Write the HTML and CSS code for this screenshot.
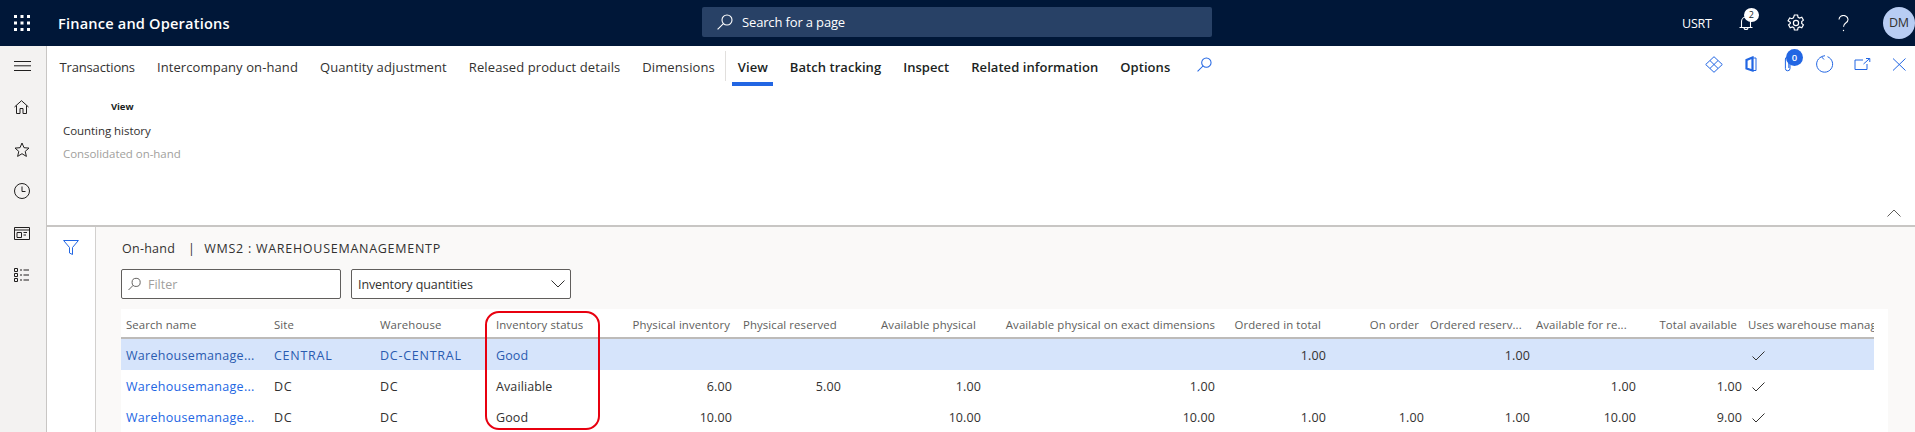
FILE: index.html
```html
<!DOCTYPE html>
<html lang="en">
<head>
<meta charset="utf-8">
<title>On-hand</title>
<link rel="stylesheet" href="styles.css">
</head>
<body>
<header class="topbar">
  <div class="brand">
    <svg class="waffle" width="16" height="16" viewBox="0 0 16 16" fill="#fff"><rect x="0" y="0" width="3" height="3"/><rect x="6.5" y="0" width="3" height="3"/><rect x="13" y="0" width="3" height="3"/><rect x="0" y="6.5" width="3" height="3"/><rect x="6.5" y="6.5" width="3" height="3"/><rect x="13" y="6.5" width="3" height="3"/><rect x="0" y="13" width="3" height="3"/><rect x="6.5" y="13" width="3" height="3"/><rect x="13" y="13" width="3" height="3"/></svg>
    <span class="app-name">Finance and Operations</span>
  </div>
  <div class="search">
    <svg width="16" height="16" viewBox="0 0 16 16" fill="none" stroke="#fff" stroke-width="1.1"><circle cx="10" cy="6" r="5"/><path d="M6.4 9.6 L0.6 15.4"/></svg>
    <span>Search for a page</span>
  </div>
  <div class="top-actions">
    <span class="company">USRT</span>
    <span class="bell">
      <svg width="14" height="16" viewBox="0 0 14 16" fill="none" stroke="#fff" stroke-width="1.1"><path d="M2.5 12.5V6.5a4.5 4.5 0 0 1 9 0v6M.5 12.5h13M5 12.5a2 2 0 0 0 4 0"/></svg>
      <span class="bell-badge">2</span>
    </span>
    <svg class="gear" width="18" height="18" viewBox="0 0 18 18" fill="none" stroke="#fff" stroke-width="1.2"><circle cx="9" cy="9" r="2.6"/><path d="M7.4 1h3.2l.5 2.3 1.5.8 2.2-.8 1.6 2.8-1.7 1.5v1.8l1.7 1.5-1.6 2.8-2.2-.8-1.5.8-.5 2.3H7.4l-.5-2.3-1.5-.8-2.2.8-1.6-2.8 1.7-1.5V8.2L1.100 6.700 2.700 3.900l2.200.8 1.500-.8z"/></svg>
    <svg class="help" width="11" height="17" viewBox="0 0 11 17" fill="none" stroke="#fff" stroke-width="1.1"><path d="M1 4.500a4.500 4 0 1 1 7 3.300c-1.600 1.100-2.500 1.900-2.500 4"/><circle cx="5.500" cy="15.500" r=".7" fill="#fff" stroke="none"/></svg>
    <span class="avatar">DM</span>
  </div>
</header>

<div class="shell">
  <nav class="rail">
    <span class="rail-btn rail-menu"><svg width="17" height="10" viewBox="0 0 17 10" stroke="#201f1e"><path d="M0 .5h17M0 4.800h17M0 9.500h17"/></svg></span>
    <span class="rail-btn"><svg width="15" height="14" viewBox="0 0 15 14" fill="none" stroke="#201f1e"><path d="M.5 7 7.500.7 14.500 7M2.500 5.500v8h3.500V8.500h3v5h3.500v-8"/></svg></span>
    <span class="rail-btn"><svg width="16" height="15" viewBox="0 0 16 15" fill="none" stroke="#201f1e"><path d="M8 1l2 4.700 5 .4-3.800 3.300 1.200 5L8 11.700l-4.400 2.700 1.200-5L1 6.100l5-.4z"/></svg></span>
    <span class="rail-btn"><svg width="16" height="16" viewBox="0 0 16 16" fill="none" stroke="#201f1e"><circle cx="8" cy="8" r="7.500"/><path d="M8 3.500V8.500h3.500"/></svg></span>
    <span class="rail-btn"><svg width="16" height="13" viewBox="0 0 16 13" fill="none" stroke="#201f1e"><path d="M.5.500h15v12H.5zM.5 3h15M3 5.500h4.500v5H3zM9.500 5.500h3.500M9.500 8h2.500"/></svg></span>
    <span class="rail-btn"><svg width="15" height="14" viewBox="0 0 15 14" fill="none" stroke="#201f1e"><path d="M.5.500h3v3h-3zM.5 5.500h3v3h-3zM.5 10.500h3v3h-3zM6 2h2M9.500 2H15M6 7h2M9.500 7H15M6 12h2M9.500 12H15"/></svg></span>
  </nav>

  <div class="workspace">
    <section class="ribbon">
      <div class="tabstrip">
        <span class="tab tab-first">Transactions</span>
        <span class="tab">Intercompany on-hand</span>
        <span class="tab">Quantity adjustment</span>
        <span class="tab">Released product details</span>
        <span class="tab">Dimensions</span>
        <span class="tab-sep"></span>
        <span class="tab tab-strong tab-active">View</span>
        <span class="tab tab-strong">Batch tracking</span>
        <span class="tab tab-strong">Inspect</span>
        <span class="tab tab-strong">Related information</span>
        <span class="tab tab-strong">Options</span>
        <svg class="tab-search" width="15" height="15" viewBox="0 0 16 16" fill="none" stroke="#2266e3" stroke-width="1.100"><circle cx="10" cy="6" r="5"/><path d="M6.400 9.600 L.6 15.400"/></svg>
        <div class="form-actions">
          <svg width="18" height="17" viewBox="0 0 18 17" fill="none" stroke="#2266e3"><path d="M9 .7 17.300 8.500 9 16.300.7 8.500zM5 4.600 9 8.500l4-3.900M5 12.400 9 8.500l4 3.900"/></svg>
          <svg width="18" height="16" viewBox="0 0 18 16" fill="none" stroke="#2266e3"><path d="M10 2h4v12.500h-4" /><path d="M4.500 4v8.500l6 2V1.500z" fill="#fff" stroke-width="2.200"/></svg>
          <span class="clip">
            <svg width="18" height="16" viewBox="0 0 18 16" fill="none" stroke="#2266e3"><path d="M11 3v9.500a2.300 2.300 0 0 1-4.600 0V3a1.700 1.700 0 0 1 3.400 0v9"/></svg>
            <span class="clip-badge">0</span>
          </span>
          <svg width="18" height="18" viewBox="0 0 18 18" fill="none" stroke="#2266e3"><path d="M11.500 1.700A8 8 0 1 1 5.500 1.800M5.500 1.500 9 .7M5.500 1.800 8 4.500"/></svg>
          <svg width="18" height="12" viewBox="0 0 18 12" fill="none" stroke="#2266e3"><path d="M10 2H2v9.500h12V6M10.500 6 16.500 .7M13 .5h3.800v3.500"/></svg>
          <svg width="18" height="13" viewBox="0 0 18 13" fill="none" stroke="#2266e3"><path d="M3 .5l12.500 12M15.500.5 3 12.500"/></svg>
        </div>
      </div>
      <div class="ribbon-group">
        <div class="group-title">View</div>
        <div class="group-item">Counting history</div>
        <div class="group-item group-item-off">Consolidated on-hand</div>
      </div>
      <svg class="collapse" width="14" height="8" viewBox="0 0 14 8" fill="none" stroke="#605e5c"><path d="M.5 7.500 7 1l6.500 6.500"/></svg>
    </section>

    <section class="lower">
      <aside class="filter-pane">
        <svg width="16" height="15" viewBox="0 0 16 15" fill="none" stroke="#2266e3"><path d="M.6.500h14.800L9.500 7.500v7l-3-1.500V7.500z"/></svg>
      </aside>
      <main class="content">
        <div class="caption"><span>On-hand</span><span class="caption-bar">|</span><span class="caption-id">WMS2 : WAREHOUSEMANAGEMENTP</span></div>
        <div class="controls">
          <div class="filter-box">
            <svg width="13" height="14" viewBox="0 0 16 16" fill="none" stroke="#605e5c" stroke-width="1.200"><circle cx="10" cy="6" r="5"/><path d="M6.400 9.600 L.6 15.400"/></svg>
            <span>Filter</span>
          </div>
          <div class="select-box">
            <span>Inventory quantities</span>
            <svg width="14" height="8" viewBox="0 0 14 8" fill="none" stroke="#323130"><path d="M.5.500 7 7l6.500-6.500"/></svg>
          </div>
        </div>
        <div class="card">
          <div class="grid">
            <div class="row head">
              <span class="cell">Search name</span>
              <span class="cell">Site</span>
              <span class="cell">Warehouse</span>
              <span class="cell">Inventory status</span>
              <span class="cell num h7">Physical inventory</span>
              <span class="cell h-left">Physical reserved</span>
              <span class="cell num h10">Available physical</span>
              <span class="cell num">Available physical on exact dimensions</span>
              <span class="cell num h10">Ordered in total</span>
              <span class="cell num h10">On order</span>
              <span class="cell h-tight">Ordered reserv...</span>
              <span class="cell h-tight">Available for re...</span>
              <span class="cell num h10">Total available</span>
              <span class="cell h-tight clip-text">Uses warehouse management</span>
            </div>
            <div class="row selected">
              <span class="cell name">Warehousemanage...</span>
              <span class="cell caps">CENTRAL</span>
              <span class="cell caps">DC-CENTRAL</span>
              <span class="cell">Good</span>
              <span class="cell num"></span>
              <span class="cell num"></span>
              <span class="cell num"></span>
              <span class="cell num"></span>
              <span class="cell num value">1.00</span>
              <span class="cell num"></span>
              <span class="cell num value">1.00</span>
              <span class="cell num"></span>
              <span class="cell num"></span>
              <span class="cell tick"><svg width="13" height="10" viewBox="0 0 13 10" fill="none" stroke="#323130"><path d="M.5 5.500 4 9 12.500.5"/></svg></span>
            </div>
            <div class="row">
              <span class="cell name link">Warehousemanage...</span>
              <span class="cell caps">DC</span>
              <span class="cell caps">DC</span>
              <span class="cell">Availiable</span>
              <span class="cell num">6.00</span>
              <span class="cell num">5.00</span>
              <span class="cell num">1.00</span>
              <span class="cell num">1.00</span>
              <span class="cell num"></span>
              <span class="cell num"></span>
              <span class="cell num"></span>
              <span class="cell num">1.00</span>
              <span class="cell num">1.00</span>
              <span class="cell tick"><svg width="13" height="10" viewBox="0 0 13 10" fill="none" stroke="#323130"><path d="M.5 5.500 4 9 12.500.5"/></svg></span>
            </div>
            <div class="row">
              <span class="cell name link">Warehousemanage...</span>
              <span class="cell caps">DC</span>
              <span class="cell caps">DC</span>
              <span class="cell">Good</span>
              <span class="cell num">10.00</span>
              <span class="cell num"></span>
              <span class="cell num">10.00</span>
              <span class="cell num">10.00</span>
              <span class="cell num">1.00</span>
              <span class="cell num">1.00</span>
              <span class="cell num">1.00</span>
              <span class="cell num">10.00</span>
              <span class="cell num">9.00</span>
              <span class="cell tick"><svg width="13" height="10" viewBox="0 0 13 10" fill="none" stroke="#323130"><path d="M.5 5.500 4 9 12.500.5"/></svg></span>
            </div>
          </div>
          <div class="highlight"></div>
        </div>
      </main>
    </section>
  </div>
</div>
</body>
</html>
```
FILE: styles.css
```css
* { box-sizing: border-box; }
html, body { margin: 0; height: 432px; overflow: hidden; }
body { font-family: "Open Sans", "Noto Sans", sans-serif; font-size: 13px; color: #323130; background: #fff; }
svg { display: block; flex: none; }

.topbar { height: 46px; background: #001738; color: #fff; display: grid; grid-template-columns: 702px 510px 1fr; align-items: center; }
.brand { display: flex; align-items: center; }
.waffle { margin-left: 14px; }
.app-name { margin-left: 28px; font-size: 14.6px; font-weight: 600; letter-spacing: 0.18px; }
.search { height: 30px; margin-top: -2px; background: #284166; border-radius: 2px; display: flex; align-items: center; padding-left: 15px; gap: 9px; font-size: 13px; letter-spacing: -0.15px; }
.top-actions { display: flex; align-items: center; height: 46px; padding-left: 470px; }
.company { font-size: 12.5px; letter-spacing: -0.2px; }
.bell { position: relative; margin-left: 27px; margin-top: 0; }
.bell-badge { position: absolute; left: 5px; top: -7px; width: 15px; height: 14px; border-radius: 50%; background: #fff; color: #201f1e; font-size: 9px; line-height: 14px; text-align: center; }
.gear { margin-left: 34px; }
.help { margin-left: 33px; }
.avatar { margin-left: 34px; width: 32px; height: 32px; border-radius: 50%; background: #b8cdf3; color: #323130; font-size: 12.5px; line-height: 32px; text-align: center; letter-spacing: -0.3px; }

.shell { display: flex; height: 386px; }
.rail { width: 47px; flex: none; background: #f3f2f1; border-right: 1px solid #c8c6c4; display: flex; flex-direction: column; }
.rail-btn { height: 42px; display: flex; align-items: center; padding-left: 14px; }
.rail-menu { height: 40px; }

.workspace { flex: 1; min-width: 0; display: flex; flex-direction: column; }
.ribbon { height: 181px; border-bottom: 2px solid #c8c6c4; position: relative; display: flex; flex-direction: column; }
.tabstrip { height: 40px; display: flex; align-items: center; gap: 22px; padding-left: 12.5px; padding-right: 7px; }
.tab { position: relative; white-space: nowrap; letter-spacing: 0.1px; line-height: 42px; height: 40px; }
.tab-first { letter-spacing: -0.15px; }
.tab-strong { font-weight: 600; color: #201f1e; letter-spacing: 0.05px; }
.tab-active::after { content: ""; position: absolute; left: -6px; right: -5px; bottom: 0; height: 4px; background: #2266e3; }
.tab-sep { width: 1px; height: 30px; background: #e1dfdd; margin: 0 -10px 0 -12px; }
.tab-search { margin-left: 5px; margin-top: -4px; }
.form-actions { margin-left: auto; display: flex; align-items: center; gap: 19px; margin-top: -4px; }
.clip { position: relative; display: block; }
.clip-badge { position: absolute; left: 7px; top: -7px; width: 17px; height: 17px; border-radius: 50%; background: #2266e3; color: #fff; font-size: 9.5px; font-weight: 600; line-height: 17px; text-align: center; }

.ribbon-group { padding: 14px 0 0 16px; }
.group-title { padding-left: 48px; font-size: 9.5px; font-weight: 700; color: #201f1e; line-height: 14px; letter-spacing: -0.1px; }
.group-item { font-size: 11.5px; line-height: 22px; margin-top: 6px; letter-spacing: -0.05px; color: #323130; }
.group-item + .group-item { margin-top: 1px; }
.group-item-off { color: #a19f9d; }
.collapse { position: absolute; right: 14px; bottom: 8px; }

.lower { flex: 1; min-height: 0; display: flex; }
.filter-pane { width: 49px; flex: none; border-right: 1px solid #d2d0ce; padding: 13px 0 0 16px; background: #fff; }
.content { flex: 1; min-width: 0; background: #faf9f8; padding: 0 27px 0 25px; }
.caption { height: 42px; display: flex; align-items: center; font-size: 12.5px; letter-spacing: 0.25px; padding-left: 1px; }
.caption-bar { margin: 0 9px 0 13px; }
.caption-id { letter-spacing: 0.73px; }
.controls { display: flex; gap: 10px; height: 30px; }
.filter-box, .select-box { height: 30px; background: #fff; border: 1px solid #605e5c; border-radius: 2px; display: flex; align-items: center; font-size: 12.5px; }
.filter-box { width: 220px; padding-left: 6px; gap: 7px; color: #a19f9d; }
.select-box { width: 220px; padding: 0 5px 0 6px; justify-content: space-between; letter-spacing: -0.1px; }

.card { position: relative; margin-top: 10px; background: #fff; padding-right: 14px; height: 140px; }
.row { display: grid; grid-template-columns: 148px 106px 116px 116px 130px 109px 140px 234px 111px 98px 106px 106px 106px 127px; height: 31px; align-items: center; white-space: nowrap; }
.head { height: 30px; border-bottom: 2px solid #bdbbb9; color: #605e5c; font-weight: 500; }
.cell { padding: 2px 5px 0; overflow: hidden; font-size: 12.5px; letter-spacing: 0.1px; }
.name { letter-spacing: 0.3px; }
.caps { letter-spacing: 0.75px; }
.head .cell { font-size: 11.4px; letter-spacing: 0.1px; padding-top: 3px; }
.num { text-align: right; }
.head .h7 { padding-right: 7px; }
.head .h10 { padding-right: 10px; }
.head .h-left { padding-left: 6px; }
.head .h-tight { padding-left: 1px; padding-right: 0; }
.clip-text { text-overflow: clip; }
.selected { background: #d6e4fb; color: #2a5bb0; }
.selected .value { color: #323130; }
.link { color: #2266e3; }
.tick { padding-left: 5px; }
.highlight { position: absolute; left: 364px; top: 2px; width: 115px; height: 119px; border: 2px solid #e8000f; border-radius: 14px; pointer-events: none; }
```
